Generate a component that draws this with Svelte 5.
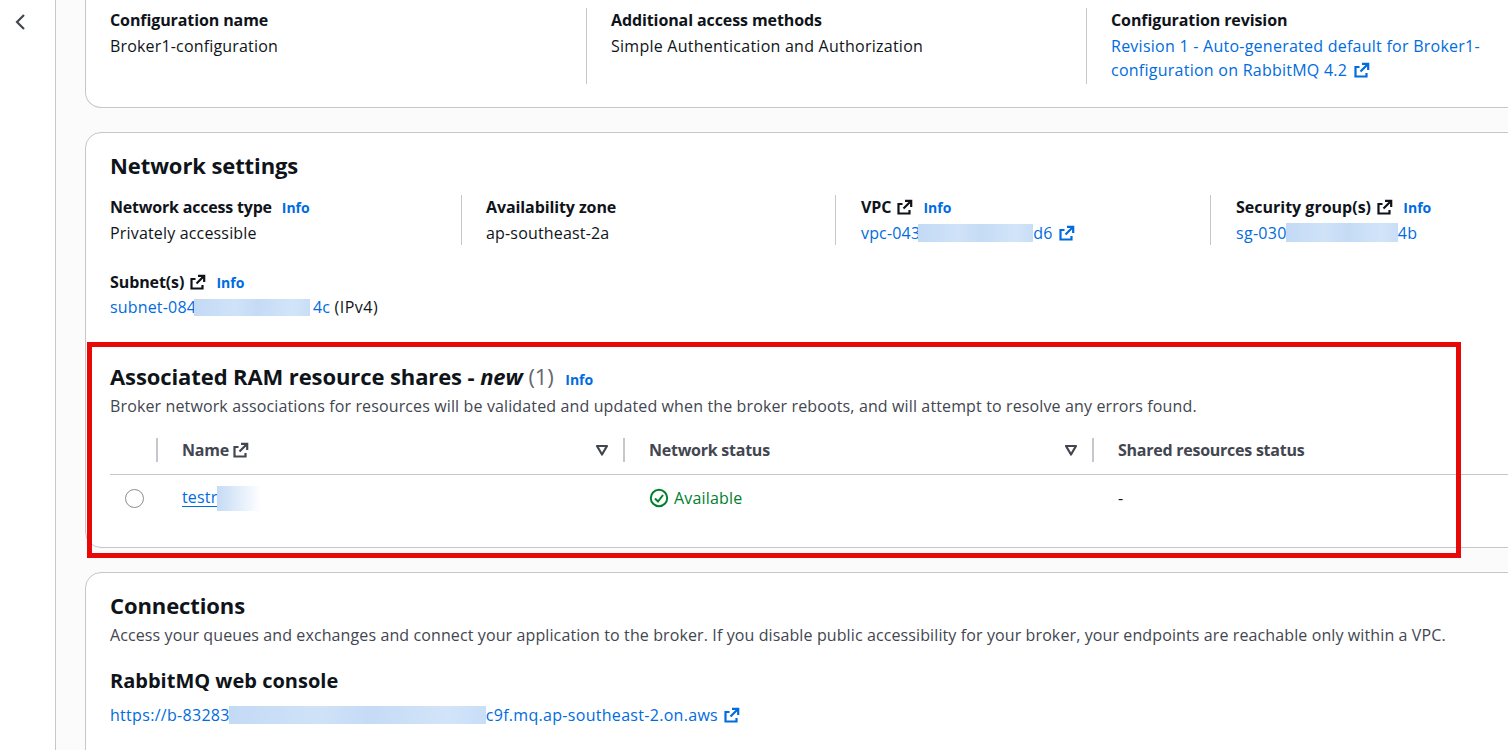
<script>
  const conf = [
    { label: 'Configuration name', value: 'Broker1-configuration' },
    { label: 'Additional access methods', value: 'Simple Authentication and Authorization' }
  ];
</script>

{#snippet ext(cls)}
  <svg class="ext {cls}" viewBox="0 0 16 16" fill="none" stroke="currentColor" stroke-width="2.2" aria-hidden="true">
    <path d="M5.5 5H1.5v9.5h11V11" />
    <path d="M6.5 9.5 14 2M8 1.8h6.2V8" />
  </svg>
{/snippet}

{#snippet caret()}
  <svg class="caret" viewBox="0 0 14 14" fill="none" stroke="currentColor" stroke-width="2.2" aria-hidden="true">
    <path d="M2 3h10L7 11.5z" stroke-linejoin="round" />
  </svg>
{/snippet}

<div class="page">
  <aside class="side">
    <svg class="back" viewBox="0 0 12 18" fill="none" stroke="currentColor" stroke-width="2.2" aria-hidden="true">
      <path d="M10 2 3 9l7 7" />
    </svg>
  </aside>

  <main class="main">
    <section class="card first">
      <div class="cols three">
        {#each conf as c}
          <div class="col">
            <div class="label">{c.label}</div>
            <div class="value">{c.value}</div>
          </div>
        {/each}
        <div class="col">
          <div class="label">Configuration revision</div>
          <a class="link rev" href="#top">Revision 1 - Auto-generated default for Broker1-configuration on RabbitMQ 4.2 {@render ext('')}</a>
        </div>
      </div>
    </section>

    <section class="card net">
      <h2>Network settings</h2>
      <div class="cols four">
        <div class="col">
          <div class="label tight">Network access type <span class="info">Info</span></div>
          <div class="value">Privately accessible</div>
        </div>
        <div class="col">
          <div class="label">Availability zone</div>
          <div class="value">ap-southeast-2a</div>
        </div>
        <div class="col">
          <div class="label">VPC {@render ext('')} <span class="info">Info</span></div>
          <div class="value"><a class="link" href="#top">vpc-043<span class="blur b-vpc"></span>d6 {@render ext('')}</a></div>
        </div>
        <div class="col">
          <div class="label wide">Security group(s) {@render ext('')} <span class="info">Info</span></div>
          <div class="value"><a class="link sg" href="#top">sg-030<span class="blur b-sg"></span>4b</a></div>
        </div>
      </div>
      <div class="subnet">
        <div class="label">Subnet(s) {@render ext('')} <span class="info">Info</span></div>
        <div class="value"><a class="link" href="#top">subnet-084<span class="blur b-sub"></span>4c</a> <span class="ipv">(IPv4)</span></div>
      </div>

      <h2 class="ram">Associated RAM resource shares - <em>new</em> <span class="count">(1)</span> <span class="info">Info</span></h2>
      <p class="desc">Broker network associations for resources will be validated and updated when the broker reboots, and will attempt to resolve any errors found.</p>

      <div class="table">
        <div class="thead">
          <div class="th sel"></div>
          <div class="th"><span>Name {@render ext('near')}</span>{@render caret()}</div>
          <div class="th"><span>Network status</span>{@render caret()}</div>
          <div class="th"><span>Shared resources status</span></div>
        </div>
        <div class="tr">
          <div class="td sel"><span class="radio"></span></div>
          <div class="td"><a class="link under" href="#top">testr<span class="blur b-test"></span></a></div>
          <div class="td ok">
            <svg class="check" viewBox="0 0 20 20" fill="none" stroke="currentColor" stroke-width="2" aria-hidden="true">
              <circle cx="10" cy="10" r="8.2" />
              <path d="m6 10.5 3 3 5-6.5" />
            </svg>
            Available
          </div>
          <div class="td">-</div>
        </div>
      </div>
    </section>

    <section class="card conn">
      <h2>Connections</h2>
      <p class="desc">Access your queues and exchanges and connect your application to the broker. If you disable public accessibility for your broker, your endpoints are reachable only within a VPC.</p>
      <h3>RabbitMQ web console</h3>
      <div class="value url"><a class="link" href="#top">https://b-83283<span class="blur b-url"></span>c9f.mq.ap-southeast-2.on.aws {@render ext('')}</a></div>
    </section>
  </main>

  <div class="highlight"></div>
</div>

<style>
  :global(body) {
    margin: 0;
    background: #fbfbfb;
  }
  .page {
    position: relative;
    display: flex;
    width: 1508px;
    height: 750px;
    overflow: hidden;
    font-family: "Open Sans", "Noto Sans", sans-serif;
    font-size: 16px;
    line-height: 24px;
    letter-spacing: 0.17px;
    color: #0f141a;
  }
  .side {
    flex: none;
    box-sizing: border-box;
    width: 56px;
    background: #fff;
    border-right: 1px solid #c6c6cd;
    padding: 13px 0 0 14px;
  }
  .back {
    display: block;
    width: 12px;
    height: 18px;
    color: #424650;
  }
  .main {
    flex: none;
    width: 1500px;
    margin-left: 29px;
    display: flex;
    flex-direction: column;
    gap: 24px;
  }
  .card {
    flex: none;
    box-sizing: border-box;
    background: #fff;
    border: 1px solid #c6c6cd;
    border-radius: 16px;
    padding: 0 24px;
  }
  .first {
    height: 108px;
    border-top: none;
    border-top-left-radius: 0;
    border-top-right-radius: 0;
    padding-top: 8px;
  }
  .net {
    height: 416px;
    padding-top: 17px;
  }
  .conn {
    height: 300px;
    padding-top: 17px;
  }
  h2 {
    margin: 0;
    font-size: 22px;
    line-height: 30px;
    font-weight: 700;
    letter-spacing: -0.1px;
    white-space: nowrap;
  }
  h3 {
    margin: 21px 0 0;
    font-size: 20px;
    line-height: 26px;
    font-weight: 700;
    letter-spacing: 0;
  }
  .cols {
    display: grid;
  }
  .three {
    grid-template-columns: 476px 500px 1fr;
  }
  .three .col:nth-child(2) .value {
    letter-spacing: 0.25px;
  }
  .four {
    grid-template-columns: 351px 374px 375px 1fr;
    margin-top: 15px;
  }
  .col {
    box-sizing: border-box;
    min-height: 76px;
    padding: 0 0 0 24px;
    border-left: 1px solid #c6c6cd;
  }
  .four .col {
    min-height: 50px;
    height: 50px;
  }
  .four .col:nth-child(n + 3) {
    padding-left: 25px;
  }
  .col:first-child {
    border-left: none;
    padding-left: 0;
  }
  .label {
    height: 24px;
    font-weight: 700;
    letter-spacing: -0.1px;
    margin-bottom: 2px;
    white-space: nowrap;
  }
  .label.tight {
    letter-spacing: -0.2px;
  }
  .label.wide {
    letter-spacing: 0;
  }
  .value {
    white-space: nowrap;
  }
  .subnet .label {
    margin-bottom: 1px;
  }
  .ipv {
    letter-spacing: 0.5px;
  }
  .url {
    margin-top: 9px;
    letter-spacing: 0.3px;
  }
  .rev {
    display: block;
    width: 375px;
    letter-spacing: 0.25px;
  }
  .link {
    color: #006ce0;
    text-decoration: none;
  }
  .sg {
    letter-spacing: 0.3px;
  }
  .under {
    text-decoration: underline;
    text-underline-offset: 3px;
  }
  .info {
    color: #006ce0;
    font-size: 14px;
    font-weight: 700;
    letter-spacing: 0;
    margin-left: 6px;
  }
  .ext {
    display: inline-block;
    width: 16px;
    height: 16px;
    vertical-align: -2px;
    margin-left: 2px;
  }
  .ext.near {
    margin-left: 0;
  }
  .subnet {
    margin-top: 25px;
  }
  .ram {
    margin-top: 42px;
  }
  .ram .info {
    margin-left: 6px;
  }
  .ram em {
    font-style: italic;
  }
  .count {
    color: #656871;
    font-weight: 400;
  }
  .desc {
    margin: -1px 0 0;
    color: #424650;
    letter-spacing: 0.13px;
    white-space: nowrap;
  }
  .conn .desc {
    margin-top: 3px;
    letter-spacing: 0.11px;
  }
  .table {
    margin-top: 15px;
  }
  .thead,
  .tr {
    display: grid;
    grid-template-columns: 47px 467px 469px 1fr;
  }
  .thead {
    height: 36px;
    border-bottom: 1px solid #c6c6cd;
    padding-top: 5px;
    grid-template-columns: 46px 467px 469px 1fr;
  }
  .th {
    box-sizing: border-box;
    display: flex;
    align-items: center;
    justify-content: space-between;
    height: 24px;
    padding: 0 14px 0 24px;
    color: #424650;
    font-weight: 700;
    letter-spacing: -0.25px;
    border-left: 2px solid #c6c6cd;
  }
  .th.sel {
    border-left: none;
  }
  .caret {
    width: 14px;
    height: 14px;
    color: #424650;
  }
  .tr {
    padding-top: 10px;
  }
  .td {
    padding-left: 25px;
    display: flex;
    align-items: center;
    gap: 5px;
    height: 26px;
  }
  .td.sel {
    padding-left: 15px;
  }
  .radio {
    display: block;
    box-sizing: border-box;
    width: 19px;
    height: 19px;
    border: 1.5px solid #8c8c94;
    border-radius: 50%;
  }
  .ok {
    color: #00802f;
  }
  .check {
    width: 20px;
    height: 20px;
  }
  .blur {
    display: inline-block;
    height: 18px;
    vertical-align: -3px;
    background: linear-gradient(90deg, #c3daf5, #cfe2f8 35%, #c5dbf5 55%, #d2e4f9 85%, #c8def7);
  }
  .b-vpc { width: 115px; margin-left: -2px; }
  .b-sg { width: 112px; height: 19px; margin-left: -1px; }
  .b-sub { width: 116px; height: 17px; margin: 0 3px 0 -2px; }
  .b-url { width: 257px; margin-left: -1px; }
  .b-test {
    width: 44px;
    height: 25px;
    vertical-align: -8px;
    background: linear-gradient(90deg, #c5dbf5, #ffffff);
  }
  .highlight {
    position: absolute;
    left: 87px;
    top: 342px;
    width: 1374px;
    height: 216px;
    box-sizing: border-box;
    border: 5px solid #e80808;
    pointer-events: none;
  }
</style>
